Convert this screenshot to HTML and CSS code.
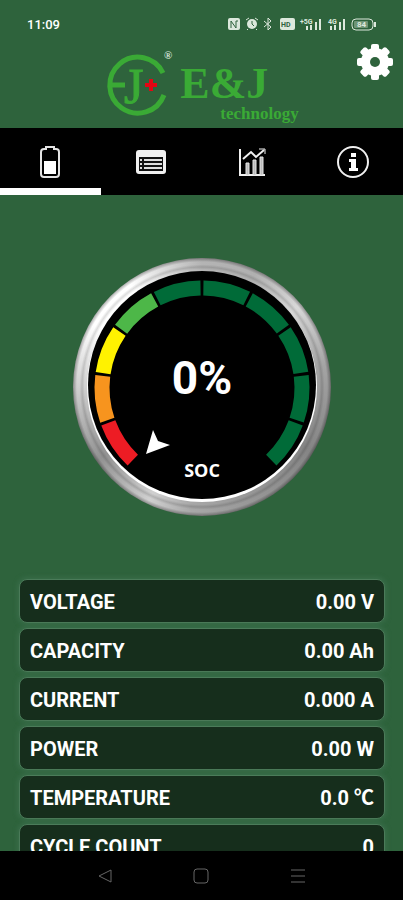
FILE: index.html
```
<!DOCTYPE html>
<html lang="en">
<head>
  <meta charset="UTF-8">
  <meta name="viewport" content="width=device-width, initial-scale=1">
  <title>E&amp;J technology</title>
  <link rel="stylesheet" href="styles.css">
</head>
<body>

<!-- Status bar -->
<div class="status-bar">
  <span class="clock">11:09</span>
  <svg class="status-icons" width="150" height="16" viewBox="0 0 150 16" aria-hidden="true">
    <rect x="1" y="2" width="12" height="12" rx="2"/>
    <path class="cut" d="M4 12V5l5 7V5h2"/>
    <circle cx="25" cy="8" r="5"/>
    <path class="line" d="M19 4l3-2M31 4l-3-2M21 13l-1 1M29 13l1 1"/>
    <path class="cut" d="M25 5v3l2 2"/>
    <path class="line" d="M37 5l7 6-3 3V2l3 3-7 6"/>
    <rect x="53" y="2" width="15" height="12" rx="2"/>
    <text class="dark" x="54" y="11" font-size="7">HD</text>
    <text x="73" y="8" font-size="7">+5G</text>
    <path class="bar" d="M80 14v-4M84 14V9M89 14V6M93 14V3"/>
    <text x="101" y="8" font-size="7">4G</text>
    <path class="bar" d="M104 14v-4M108 14V9M113 14V6M117 14V3"/>
    <rect class="line" x="125" y="3" width="21" height="11" rx="4"/>
    <rect class="charge" x="127" y="5" width="14" height="7" rx="1"/>
    <path class="bar" d="M148 6v5"/>
    <text x="130" y="11" font-size="8">84</text>
  </svg>
</div>

<!-- Logo and settings -->
<header class="header">
  <div class="logo">
    <svg class="logo-mark" width="72" height="72" viewBox="0 0 72 72" aria-hidden="true">
      <path class="logo-ring" d="M59 25A28 28 0 1 0 60 47"/>
      <path class="logo-ring" d="M4 37H21"/>
      <text class="logo-j" x="20" y="55">J</text>
      <path class="logo-plus" d="M47 31v12M41 37h12"/>
      <text class="logo-reg" x="60" y="11">®</text>
    </svg>
    <div class="logo-text">
      <span class="logo-name">E&amp;J</span>
      <span class="logo-sub">technology</span>
    </div>
  </div>
  <button class="settings" aria-label="Settings">
    <svg width="36" height="36" viewBox="0 0 36 36">
      <g>
        <rect x="14" y="0" width="8" height="36" rx="2"/>
        <rect x="14" y="0" width="8" height="36" rx="2" transform="rotate(45 18 18)"/>
        <rect x="14" y="0" width="8" height="36" rx="2" transform="rotate(90 18 18)"/>
        <rect x="14" y="0" width="8" height="36" rx="2" transform="rotate(135 18 18)"/>
      </g>
      <circle cx="18" cy="18" r="14"/>
      <circle class="hole" cx="18" cy="18" r="5"/>
    </svg>
  </button>
</header>

<!-- Tabs -->
<nav class="tabs">
  <button class="tab active" aria-label="Battery">
    <svg width="20" height="34" viewBox="0 0 20 34">
      <path d="M6 4V2h8v2h2q3 0 3 3v22q0 3-3 3H4q-3 0-3-3V7q0-3 3-3z" fill="#000" stroke="#e4e4e4" stroke-width="2"/>
      <rect x="4" y="16" width="12" height="13" fill="#fff"/>
    </svg>
  </button>
  <button class="tab" aria-label="Details">
    <svg width="32" height="34" viewBox="0 0 32 34">
      <rect x="1" y="5" width="30" height="24" rx="3" fill="#f0f0f0"/>
      <rect x="4" y="12" width="24" height="14" fill="#111"/>
      <path d="M5 15h2M5 19h2M5 23h2M9 15h18M9 19h18M9 23h18" stroke="#ddd" stroke-width="2"/>
    </svg>
  </button>
  <button class="tab" aria-label="Charts">
    <svg width="28" height="34" viewBox="0 0 28 34">
      <g fill="none" stroke="#f0f0f0" stroke-width="2">
        <path d="M2 4v26h25"/>
        <path d="M5 14l8-7 5 5 8-7"/>
        <path d="M21 4h6v5" stroke-width="1"/>
      </g>
      <path d="M8 18h3v12H8zM15 15h3v15h-3zM22 12h3v18h-3z" fill="#bbb" stroke="#e8e8e8"/>
    </svg>
  </button>
  <button class="tab" aria-label="Info">
    <svg width="34" height="34" viewBox="0 0 34 34">
      <circle cx="17" cy="17" r="15" fill="none" stroke="#f0f0f0" stroke-width="2"/>
      <path d="M15 8h5v4h-5zM13 14h7v9h2v3h-9v-3h2v-6h-2z" fill="#fff"/>
    </svg>
  </button>
</nav>

<main class="content">
  <div class="gauge">
    <svg viewBox="0 0 258 258" role="img" aria-label="State of charge">
      <circle cx="129" cy="129" r="115" fill="#fff"/>
      <circle cx="129" cy="127" r="114" fill="#000"/>
      <g class="segments" id="segments"></g>
      <path d="M73 196l7-24 5 11 12 4z" fill="#fff"/>
      <text class="gauge-value" x="129" y="136">0%</text>
      <text class="gauge-label" x="129" y="219">SOC</text>
    </svg>
  </div>

  <dl class="readings">
    <div class="reading"><dt>VOLTAGE</dt><dd>0.00 V</dd></div>
    <div class="reading"><dt>CAPACITY</dt><dd>0.00 Ah</dd></div>
    <div class="reading"><dt>CURRENT</dt><dd>0.000 A</dd></div>
    <div class="reading"><dt>POWER</dt><dd>0.00 W</dd></div>
    <div class="reading"><dt>TEMPERATURE</dt><dd>0.0 ℃</dd></div>
    <div class="reading"><dt>CYCLE COUNT</dt><dd>0</dd></div>
  </dl>
</main>

<!-- Android navigation -->
<nav class="system-nav">
  <button aria-label="Back">
    <svg width="16" height="16" viewBox="0 0 16 16"><path d="M2 8l12-6v12z"/></svg>
  </button>
  <button aria-label="Home">
    <svg width="16" height="16" viewBox="0 0 16 16"><rect x="1" y="1" width="14" height="14" rx="3"/></svg>
  </button>
  <button aria-label="Recent apps">
    <svg width="16" height="16" viewBox="0 0 16 16"><path d="M1 2h14M1 8h14M1 14h14"/></svg>
  </button>
</nav>

<script>
  const colors = ["#ed1c24", "#f7941e", "#fff200", "#4db748",
                  "#006b38", "#006b38", "#006b38", "#006b38", "#006b38", "#006b38"];
  const step = 27.4;

  // one arc for every 10% of charge, starting at the bottom left
  document.getElementById("segments").innerHTML = colors.map((color, i) => {
    const angle = -90 - step * 5 + step * i + 0.8;
    return `<circle cx="129" cy="130" r="100" pathLength="360" stroke="${color}"
      stroke-dasharray="${step - 1.6} 360" transform="rotate(${angle} 129 130)"/>`;
  }).join("");
</script>

</body>
</html>
```
FILE: styles.css
```
* {
  box-sizing: border-box;
}

body {
  margin: 0;
  height: 100vh;
  display: flex;
  flex-direction: column;
  overflow: hidden;
  background: #2e633c;
  color: #fff;
  font-family: Roboto, "Noto Sans CJK SC", sans-serif;
}

button {
  padding: 0;
  border: none;
  background: none;
  cursor: pointer;
}

svg {
  display: block;
}

/* Status bar */
.status-bar {
  flex: none;
  height: 48px;
  padding: 0 26px 0 27px;
  display: flex;
  justify-content: space-between;
  align-items: center;
}

.clock {
  font-size: 13px;
  font-weight: 500;
}

.status-icons {
  fill: #dce8dc;
  font-weight: 700;
}

.status-icons .cut {
  fill: none;
  stroke: #2e633c;
}

.status-icons .line {
  fill: none;
  stroke: #dce8dc;
}

.status-icons .bar {
  stroke: #dce8dc;
  stroke-width: 2;
}

.status-icons .dark {
  fill: #2e633c;
}

.status-icons .charge {
  fill: #6f9577;
}

/* Header */
.header {
  flex: none;
  height: 80px;
  position: relative;
  display: flex;
  justify-content: center;
}

.logo {
  display: flex;
  gap: 4px;
  color: #3aaa35;
  font-family: "Liberation Serif", serif;
}

.logo-ring {
  fill: none;
  stroke: #3aaa35;
  stroke-width: 5;
}

.logo-j {
  fill: #3aaa35;
  stroke: #3aaa35;
  font-size: 50px;
}

.logo-plus {
  stroke: #e30613;
  stroke-width: 4;
}

.logo-reg {
  fill: #dce8dc;
  font-size: 11px;
  font-weight: 700;
}

.logo-text {
  display: flex;
  flex-direction: column;
  padding-top: 15px;
  font-weight: 700;
}

.logo-name {
  font-size: 44px;
  line-height: 42px;
}

.logo-sub {
  padding-left: 40px;
  font-size: 17px;
  line-height: 17px;
}

.settings {
  position: absolute;
  top: -4px;
  right: 10px;
}

.settings svg {
  fill: #fff;
}

.settings .hole {
  fill: #2e633c;
}

/* Tabs */
.tabs {
  flex: none;
  height: 67px;
  display: grid;
  grid-template-columns: repeat(4, 1fr);
  background: #000;
}

.tab {
  display: flex;
  justify-content: center;
  align-items: center;
  border-top: 7px solid transparent;
  border-bottom: 7px solid transparent;
}

.tab.active {
  border-bottom-color: #fff;
}

/* Gauge and readings */
.content {
  flex: 1;
  min-height: 0;
  overflow: hidden;
  padding: 63px 18px 0 19px;
}

.gauge {
  width: 71%;
  max-width: 258px;
  margin: 0 auto 63px;
  border-radius: 50%;
  background:
    radial-gradient(circle closest-side, transparent 91%, #0002 93%, transparent 95%, transparent 97%, #0005 100%),
    conic-gradient(#b4b4b4, #b0b0b0 25deg, #d8d8d8 50deg, #a4a4a4 80deg, #858585 120deg, #999 160deg, #a8a8a8 185deg, #d0d0d0 205deg, #929292 235deg, #d0d0d0 270deg, #fff 300deg, #fff 325deg, #b4b4b4);
}

.segments circle {
  fill: none;
  stroke-width: 15;
}

.gauge text {
  fill: #fff;
  font-weight: 700;
  text-anchor: middle;
}

.gauge-value {
  font-size: 46px;
}

.gauge .gauge-label {
  font-family: "Open Sans", sans-serif;
  font-size: 18px;
}

.readings {
  margin: 0;
  display: flex;
  flex-direction: column;
  gap: 5px;
}

.reading {
  flex: none;
  height: 44px;
  padding: 2px 10px 0;
  display: flex;
  justify-content: space-between;
  align-items: center;
  border: 1px solid #4b7b59;
  border-radius: 8px;
  background: #162e1c;
  font-size: 20px;
  line-height: 24px;
  font-weight: 700;
  box-shadow: 0 0 4px 2px #386c48;
}

.reading dd {
  height: 24px;
  margin: 0;
}

/* System navigation */
.system-nav {
  flex: none;
  height: 49px;
  padding: 0 57px;
  display: flex;
  justify-content: space-around;
  align-items: center;
  background: #000;
}

.system-nav svg {
  fill: none;
  stroke: #666;
}
```
